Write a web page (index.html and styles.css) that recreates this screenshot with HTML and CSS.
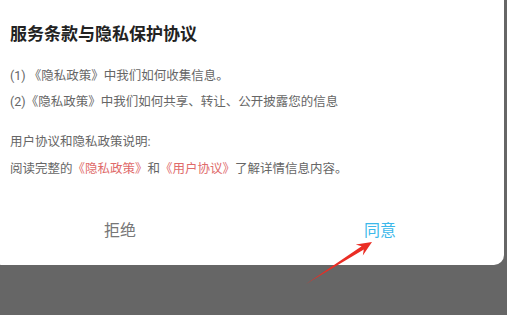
FILE: index.html
```html
<!DOCTYPE html>
<html lang="zh-CN">
<head>
    <meta charset="UTF-8">
    <meta name="viewport" content="width=device-width, initial-scale=1.0">
    <title>服务条款与隐私保护协议</title>
    <link rel="stylesheet" href="styles.css">
</head>
<body>
    <div class="dialog">
        <h1 class="title">服务条款与隐私保护协议</h1>
        <div class="group">
            <p class="line">(1) 《隐私政策》中我们如何收集信息。</p>
            <p class="line">(2)《隐私政策》中我们如何共享、转让、公开披露您的信息</p>
        </div>
        <div class="group second">
            <p class="line">用户协议和隐私政策说明:</p>
            <p class="line">阅读完整的<span class="link">《隐私政策》</span>和<span class="link">《用户协议》</span>了解详情信息内容。</p>
        </div>
        <div class="buttons">
            <div class="btn refuse">拒绝</div>
            <div class="btn agree">同意</div>
        </div>
    </div>
    <!-- 标注箭头 -->
    <svg class="arrow" width="507" height="315" viewBox="0 0 507 315">
        <polygon points="306,284 363.8,249.6 362.8,255.6 372,242 355.8,244.6 361.6,246.2" fill="#ea2d24"/>
    </svg>
</body>
</html>
```

FILE: styles.css
```css
html, body {
    margin: 0;
    padding: 0;
}
body {
    width: 507px;
    height: 315px;
    background-color: #666666;
    font-family: Roboto, "Noto Sans CJK SC", sans-serif;
    overflow: hidden;
    position: relative;
}
.dialog {
    background-color: #fff;
    margin-left: -8px;
    margin-right: 3px;
    padding: 22px 0 11px 18px;
    border-radius: 0 0 10px 10px;
}
.title {
    margin: 0;
    font-size: 17px;
    line-height: 24px;
    font-weight: 700;
    color: #222;
}
.group {
    margin-top: 17px;
}
.group.second {
    margin-top: 13px;
}
.line {
    margin: 0;
    font-size: 12.5px;
    line-height: 26px;
    color: #666;
}
.second .line {
    line-height: 27px;
}
.link {
    color: #e06a6a;
}
.buttons {
    display: flex;
    margin-left: -20px;
    margin-top: 22px;
    height: 50px;
}
.btn {
    flex: 0 0 260px;
    display: flex;
    align-items: center;
    justify-content: center;
    font-size: 16px;
    cursor: pointer;
}
.refuse {
    color: #777;
}
.agree {
    color: #3cb8ea;
}
.arrow {
    position: absolute;
    left: 0;
    top: 0;
}
```
